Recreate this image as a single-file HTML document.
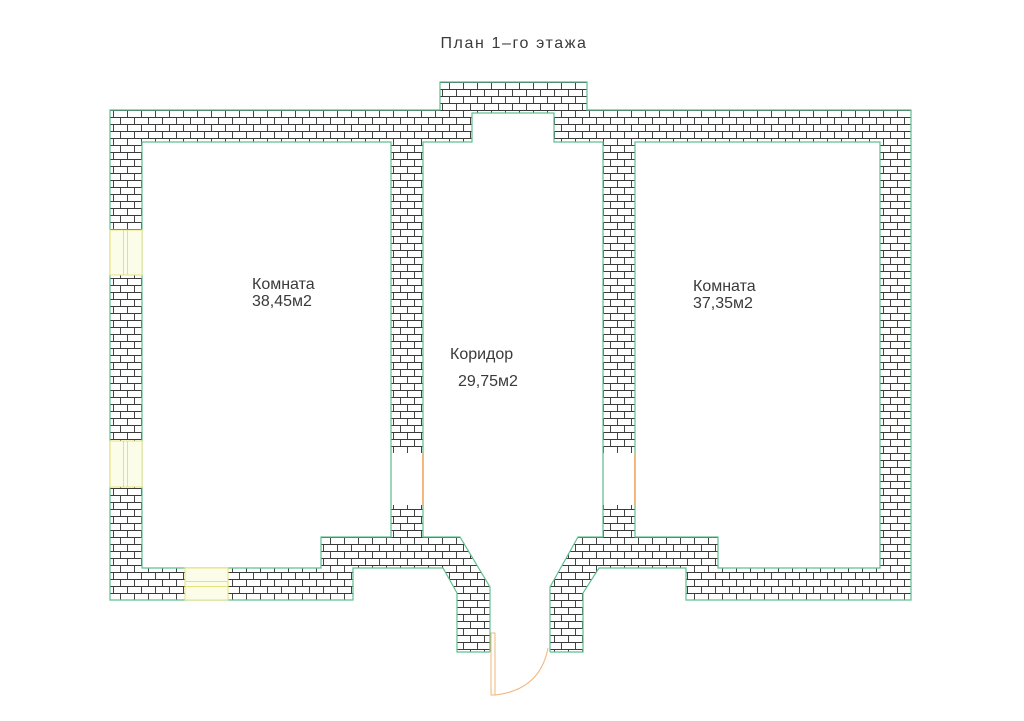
<!DOCTYPE html>
<html><head><meta charset="utf-8"><style>
html,body{margin:0;padding:0;background:#fff;}
svg{display:block}
text{font-family:"Liberation Sans",sans-serif;fill:#3a3a3a;}
</style></head><body>
<svg width="1024" height="721" viewBox="0 0 1024 721" xmlns="http://www.w3.org/2000/svg">
<defs>
<pattern id="br" patternUnits="userSpaceOnUse" x="110" y="110" width="14" height="14">
<rect width="14" height="14" fill="#fff"/>
<path d="M0 0.5H14M0 7.5H14M3.5 0V7M10.5 7V14" stroke="#3a3a3a" stroke-width="0.95" fill="none"/>
</pattern>
</defs>
<text x="514" y="48" font-size="16" text-anchor="middle" letter-spacing="1.6">План 1–го этажа</text>
<polygon points="110,110 440,110 440,82 587,82 587,110 911,110 911,600 686,600 686,568 599,568 583,593 583,652 457,652 457,593 443,568 353,568 353,600 110,600" fill="url(#br)" stroke="#5fbf8f" stroke-width="1.2"/>
<polygon points="472,113 554,113 554,142 603,142 603,537 578,537 550,587 550,656 490,656 490,587 460,537 423,537 423,142 472,142" fill="#fff"/>
<polyline points="490,652 490,587 460,537 423,537 423,142 472,142 472,113 554,113 554,142 603,142 603,537 578,537 550,587 550,652" fill="none" stroke="#5fbf8f" stroke-width="1.2"/>
<polygon points="142,142 391,142 391,537 321,537 321,568 142,568" fill="#fff" stroke="#5fbf8f" stroke-width="1.2"/>
<polygon points="635,142 880,142 880,568 718,568 718,537 635,537" fill="#fff" stroke="#5fbf8f" stroke-width="1.2"/>
<g fill="#fcfde8" stroke="#e6e27a" stroke-width="1">
<rect x="110" y="230" width="32" height="45"/>
<rect x="110" y="441" width="32" height="46"/>
<rect x="185" y="568" width="43" height="32"/>
</g>
<g stroke="#e6e27a" stroke-width="1">
<path d="M123.5 230V275M127.5 230V275M123.5 441V487M127.5 441V487M185 581.5H228M185 586.5H228"/>
</g>
<rect x="391" y="453" width="32" height="52" fill="#fff"/>
<rect x="603" y="453" width="32" height="52" fill="#fff"/>
<g stroke="#f2b47a" stroke-width="1" fill="none">
<path d="M391.5 453V505M422.5 453V505M603.5 453V505M634.5 453V505"/>
<path d="M491 633V695H495V633Z"/>
<path d="M495 695Q540 690 548 648"/>
</g>
<text x="252" y="289" font-size="16">Комната</text>
<text x="252" y="306" font-size="16">38,45м2</text>
<text x="693" y="291" font-size="16">Комната</text>
<text x="693" y="308" font-size="16">37,35м2</text>
<text x="450" y="359" font-size="16">Коридор</text>
<text x="458" y="386" font-size="16">29,75м2</text>
</svg>
</body></html>
